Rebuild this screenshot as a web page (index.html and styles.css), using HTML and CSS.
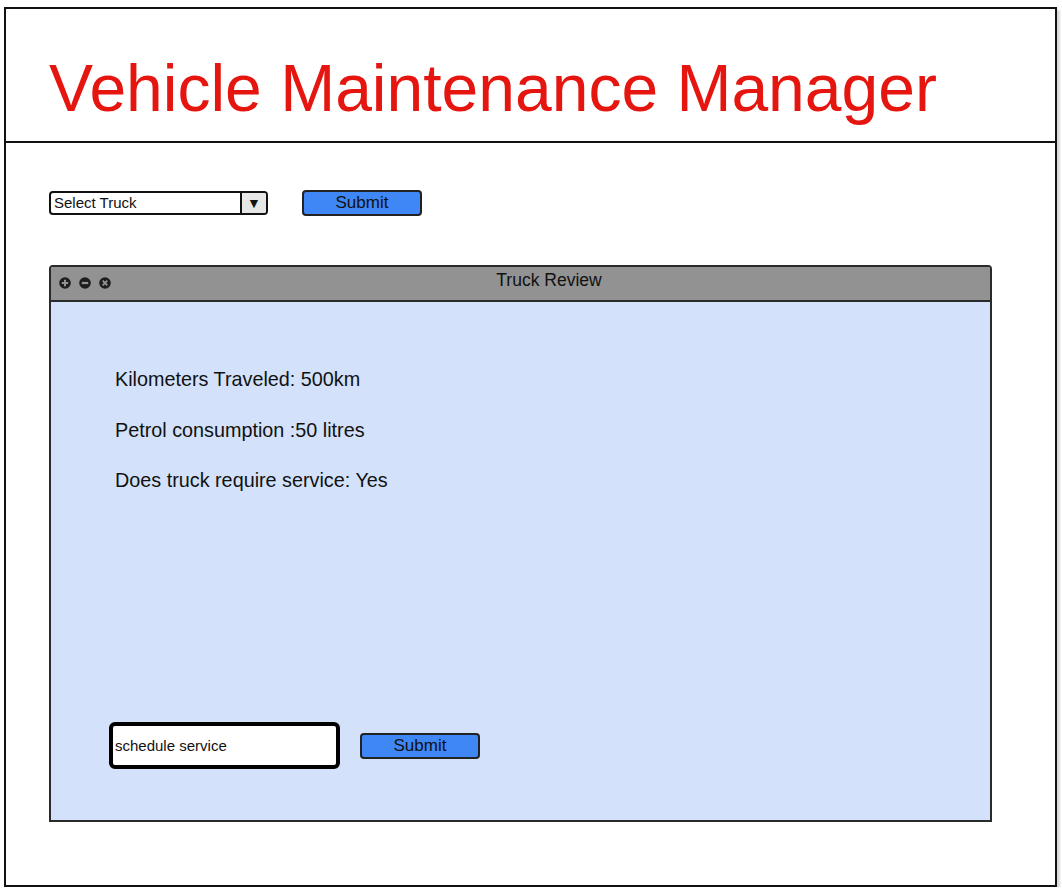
FILE: index.html
```html
<!DOCTYPE html>
<html>
<head>
<meta charset="utf-8">
<link rel="stylesheet" href="styles.css">
</head>
<body>
<div class="frame">
  <header class="header">
    <h1 class="title">Vehicle Maintenance Manager</h1>
  </header>
  <div class="controls">
    <div class="select">
      <span class="select-label">Select Truck</span>
      <span class="select-arrow">&#9660;</span>
    </div>
    <button class="btn btn-top">Submit</button>
  </div>
  <section class="window">
    <div class="titlebar">
      <div class="win-icons">
        <svg class="win-icon" viewBox="0 0 12 12"><circle cx="6" cy="6" r="5.8" fill="#1e1e1e"/><path d="M2.8 6h6.4M6 2.8v6.4" stroke="#929292" stroke-width="2"/></svg>
        <svg class="win-icon" viewBox="0 0 12 12"><circle cx="6" cy="6" r="5.8" fill="#1e1e1e"/><path d="M2.8 6h6.4" stroke="#929292" stroke-width="2.2"/></svg>
        <svg class="win-icon" viewBox="0 0 12 12"><circle cx="6" cy="6" r="5.8" fill="#1e1e1e"/><path d="M3.7 3.7l4.6 4.6M8.3 3.7l-4.6 4.6" stroke="#929292" stroke-width="1.9"/></svg>
      </div>
      <div class="win-title">Truck Review</div>
    </div>
    <div class="win-body">
      <div class="info">
        <p class="info-line">Kilometers Traveled: 500km</p>
        <p class="info-line">Petrol consumption :50 litres</p>
        <p class="info-line">Does truck require service: Yes</p>
      </div>
      <div class="service-row">
        <div class="text-input">schedule service</div>
        <button class="btn">Submit</button>
      </div>
    </div>
  </section>
</div>
</body>
</html>
```

FILE: styles.css
```css
html, body {
  margin: 0;
  padding: 0;
  background: #ffffff;
}

body {
  font-family: "Liberation Sans", Arial, sans-serif;
  color: #111;
}

.frame {
  box-sizing: border-box;
  margin: 7px 0 0 4px;
  width: 1053px;
  height: 880px;
  border: 2px solid #111;
  box-shadow: 3px 3px 2px rgba(0, 0, 0, 0.15);
  background: #fff;
}

.header {
  box-sizing: border-box;
  height: 134px;
  padding: 45px 0 0 43px;
  border-bottom: 2px solid #111;
}

.title {
  margin: 0;
  font-weight: normal;
  font-size: 66px;
  line-height: 68px;
  color: #e5160f;
  white-space: nowrap;
}

.controls {
  display: flex;
  align-items: center;
  margin: 47px 0 0 43px;
  height: 26px;
}

.select {
  box-sizing: border-box;
  display: flex;
  align-items: stretch;
  width: 219px;
  height: 24px;
  border: 2px solid #111;
  border-radius: 4px;
  background: #fff;
  overflow: hidden;
}

.select-label {
  flex: 1;
  font-size: 15px;
  line-height: 20px;
  padding-left: 3px;
}

.select-arrow {
  width: 24px;
  border-left: 2px solid #111;
  background: #e6e6e6;
  font-size: 14px;
  line-height: 20px;
  text-align: center;
}

.btn {
  box-sizing: border-box;
  width: 120px;
  height: 26px;
  padding: 0;
  border: 2px solid #222;
  border-radius: 4px;
  background: #3e87f5;
  font-family: "Liberation Sans", Arial, sans-serif;
  font-size: 17px;
  line-height: 22px;
  color: #111;
}

.btn-top {
  margin-left: 34px;
}

.window {
  box-sizing: border-box;
  display: flex;
  flex-direction: column;
  margin: 49px 0 0 43px;
  width: 943px;
  height: 557px;
  border: 2px solid #2a2a2a;
  border-radius: 4px 4px 0 0;
}

.titlebar {
  display: flex;
  align-items: center;
  height: 33px;
  background: #929292;
  border-bottom: 2px solid #2a2a2a;
  border-radius: 2px 2px 0 0;
}

.win-icons {
  display: flex;
  gap: 8px;
  padding-left: 8px;
  padding-bottom: 2px;
}

.win-icon {
  width: 12px;
  height: 12px;
  display: block;
}

.win-title {
  flex: 1;
  text-align: center;
  font-size: 17.5px;
  padding-right: 3px;
  padding-bottom: 6px;
}

.win-body {
  flex: 1;
  display: flex;
  flex-direction: column;
  background: #d3e2fa;
  padding: 52px 0 51px 64px;
}

.info-line {
  margin: 0;
  font-size: 19.8px;
  line-height: 50px;
}

.info-line + .info-line {
  margin-top: 0.5px;
}

.service-row {
  margin-top: auto;
  margin-left: -6px;
  display: flex;
  align-items: center;
  gap: 20px;
}

.text-input {
  box-sizing: border-box;
  width: 231px;
  height: 47px;
  border: 4px solid #000;
  border-radius: 6px;
  background: #fff;
  padding-left: 2px;
  font-size: 15px;
  line-height: 39px;
}
```
